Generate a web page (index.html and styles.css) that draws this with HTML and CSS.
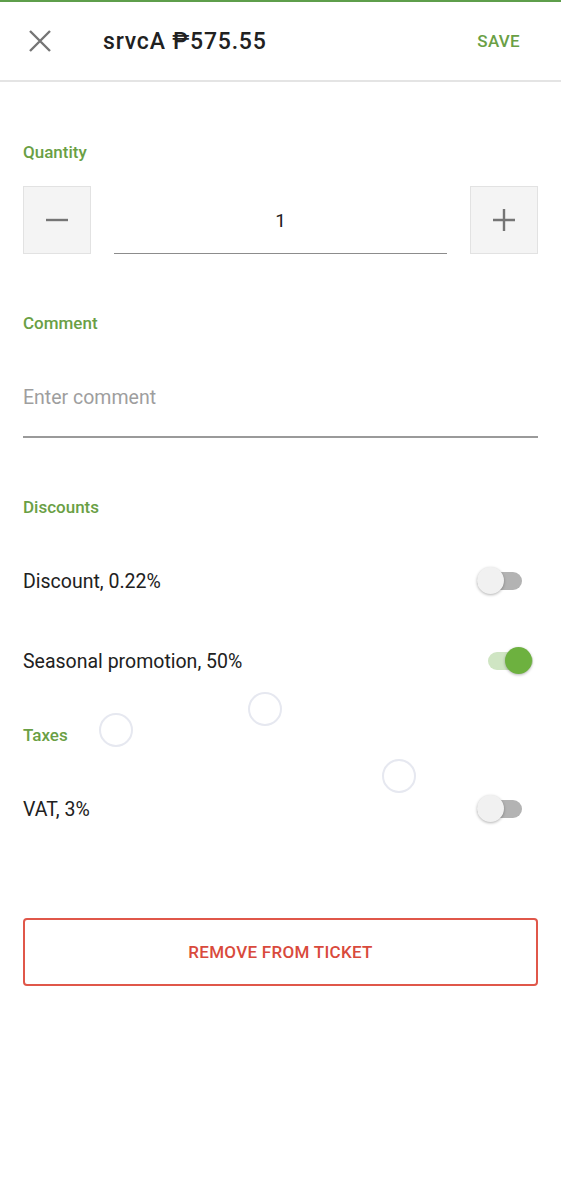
FILE: index.html
```html
<!DOCTYPE html>
<html lang="en">
<head>
  <meta charset="UTF-8" />
  <meta name="viewport" content="width=device-width, initial-scale=1.0" />
  <title>Edit item</title>
  <link rel="stylesheet" href="styles.css">
</head>
<body>
  <header class="topbar">
    <button class="icon-btn" aria-label="Close">
      <svg width="24" height="24" viewBox="0 0 24 24">
        <path d="M2 2 L22 22 M22 2 L2 22" stroke="#757575" stroke-width="2.4" fill="none"/>
      </svg>
    </button>
    <h1 class="title">srvcA ₱575.55</h1>
    <button class="save-btn">SAVE</button>
  </header>

  <main class="content">
    <section class="block block-qty">
      <h2 class="label">Quantity</h2>
      <div class="qty-row">
        <button class="qty-btn" aria-label="Decrease">
          <svg width="22" height="22" viewBox="0 0 22 22"><path d="M0 11 H22" stroke="#757575" stroke-width="2.4"/></svg>
        </button>
        <div class="qty-field">1</div>
        <button class="qty-btn" aria-label="Increase">
          <svg width="22" height="22" viewBox="0 0 22 22"><path d="M0 11 H22 M11 0 V22" stroke="#757575" stroke-width="2.4"/></svg>
        </button>
      </div>
    </section>

    <section class="block block-comment">
      <h2 class="label">Comment</h2>
      <input class="comment" placeholder="Enter comment">
    </section>

    <section class="block block-discounts">
      <h2 class="label">Discounts</h2>
      <div class="row">
        <span>Discount, 0.22%</span>
        <span class="switch"><span class="track"></span><span class="thumb"></span></span>
      </div>
      <div class="row">
        <span>Seasonal promotion, 50%</span>
        <span class="switch on"><span class="track"></span><span class="thumb"></span></span>
      </div>
    </section>

    <section class="block block-taxes">
      <h2 class="label">Taxes</h2>
      <div class="row">
        <span>VAT, 3%</span>
        <span class="switch"><span class="track"></span><span class="thumb"></span></span>
      </div>
    </section>

    <button class="remove-btn">REMOVE FROM TICKET</button>
  </main>

  <!-- touch indicators -->
  <span class="touch" style="left:99px;top:713px"></span>
  <span class="touch" style="left:248px;top:692px"></span>
  <span class="touch" style="left:382px;top:759px"></span>
</body>
</html>
```

FILE: styles.css
```css
body {
  margin: 0;
  font-family: Roboto, "Liberation Sans", sans-serif;
  background: #fff;
  color: #212121;
  position: relative;
  min-height: 1200px;
}
button {
  font-family: inherit;
  cursor: pointer;
}
.topbar {
  display: flex;
  align-items: center;
  height: 80px;
  border-top: 2px solid #5e9e4b;
  border-bottom: 2px solid #e4e4e4;
  box-sizing: border-box;
  height: 82px;
}
.icon-btn {
  background: none;
  border: none;
  padding: 0;
  margin-left: 28px;
  width: 24px;
  height: 24px;
  display: flex;
}
.title {
  margin: 0 0 0 51px;
  flex: 1;
  font-size: 23px;
  letter-spacing: 0.8px;
  font-weight: 500;
  color: #212121;
}
.save-btn {
  background: none;
  border: none;
  margin-right: 41px;
  padding: 0;
  color: #6a9f45;
  font-size: 17px;
  letter-spacing: 0.3px;
  font-weight: 500;
}
.content {
  padding: 0 23px;
}
.label {
  margin: 0;
  font-size: 17px;
  line-height: 20px;
  font-weight: 500;
  color: #6a9f45;
}
.block-qty { padding-top: 60px; }
.block-comment { padding-top: 59px; }
.block-discounts { padding-top: 59px; }
.block-taxes { padding-top: 24px; }
.qty-row {
  display: flex;
  align-items: flex-start;
  gap: 23px;
  margin-top: 24px;
}
.qty-btn {
  width: 68px;
  height: 68px;
  background: #f4f4f4;
  border: 1px solid #e2e2e2;
  display: flex;
  align-items: center;
  justify-content: center;
  padding: 0;
  flex: none;
}
.qty-field {
  flex: 1;
  height: 67px;
  line-height: 70px;
  text-align: center;
  font-size: 19px;
  border-bottom: 1px solid #8c8c8c;
}
.comment {
  display: block;
  width: 100%;
  box-sizing: border-box;
  margin-top: 41px;
  padding: 12px 0 26px;
  line-height: 24px;
  font-size: 19.5px;
  font-family: inherit;
  border: none;
  border-bottom: 2px solid #9a9a9a;
  outline: none;
  color: #212121;
}
.comment::placeholder {
  color: #9e9e9e;
}
.block-discounts .label,
.block-taxes .label {
  margin-bottom: 24px;
}
.row {
  display: flex;
  align-items: center;
  justify-content: space-between;
  height: 80px;
  font-size: 19.5px;
}
.switch {
  position: relative;
  width: 62px;
  height: 30px;
}
.track {
  position: absolute;
  left: 1px;
  top: 6px;
  width: 45px;
  height: 18px;
  border-radius: 9px;
  background: #b3b3b3;
}
.thumb {
  position: absolute;
  left: 1px;
  top: 1px;
  width: 27px;
  height: 27px;
  border-radius: 50%;
  background: #f1f1f1;
  box-shadow: 0 1px 3px rgba(0, 0, 0, 0.3);
}
.switch.on .track {
  left: 12px;
  background: #cfe5c3;
}
.switch.on .thumb {
  left: 29px;
  background: #6db13f;
}
.remove-btn {
  display: block;
  width: 100%;
  height: 68px;
  margin-top: 69px;
  background: #fff;
  border: 2px solid #e0574a;
  border-radius: 4px;
  color: #d94a3c;
  font-size: 17px;
  letter-spacing: 0.3px;
  font-weight: 500;
}
.touch {
  position: absolute;
  width: 30px;
  height: 30px;
  border: 2px solid #e6e8f0;
  border-radius: 50%;
}
```
